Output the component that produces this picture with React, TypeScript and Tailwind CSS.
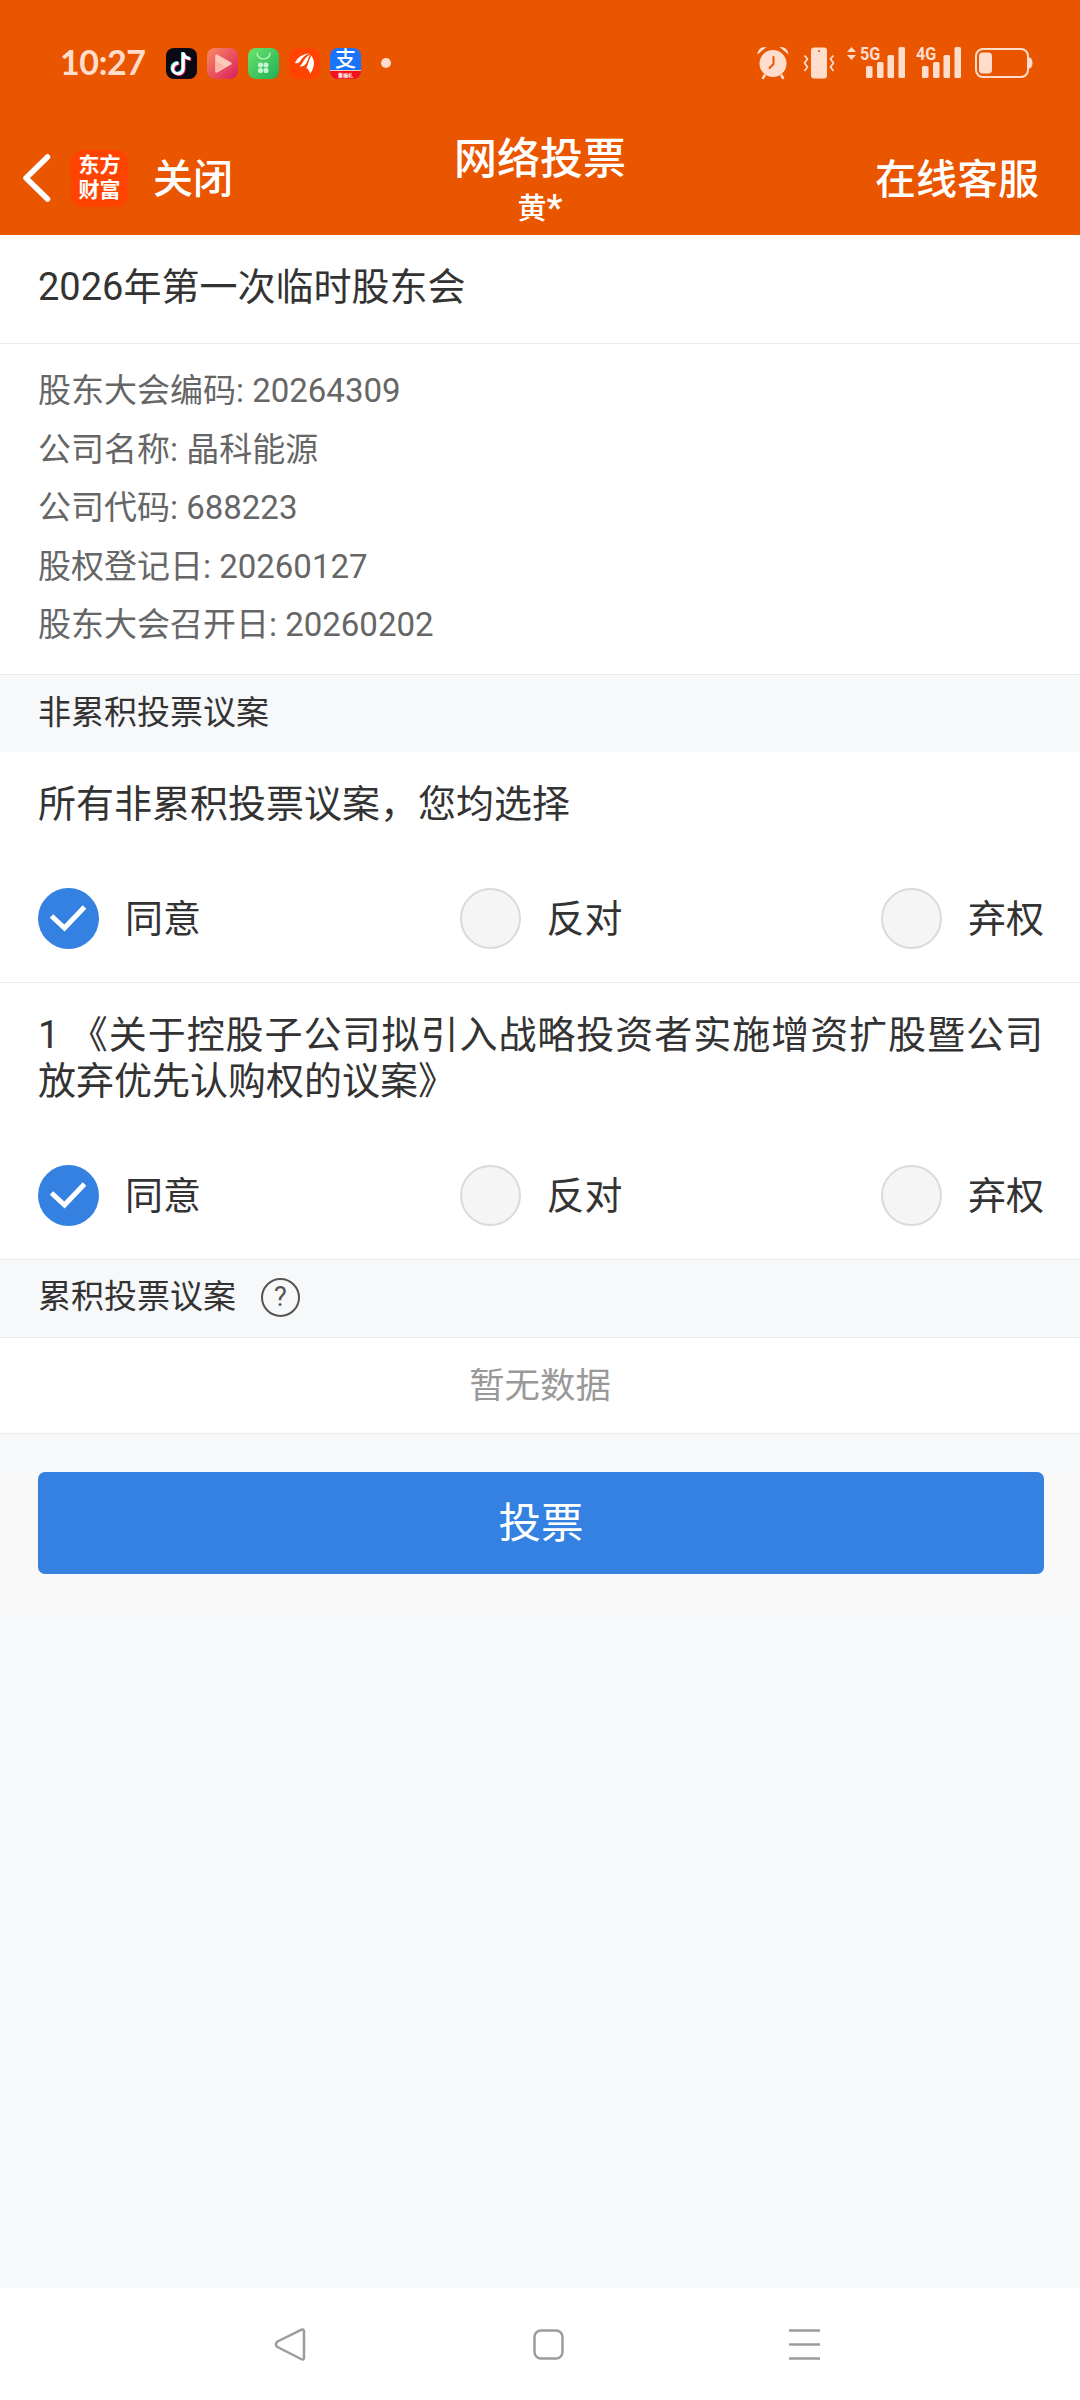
import { useState } from "react";

const SIGNAL_BARS = [
  { x: 0, h: 12 },
  { x: 11, h: 16 },
  { x: 21.5, h: 23 },
  { x: 32.5, h: 31 },
];

const MEETING_INFO = [
  { label: "股东大会编码", value: "20264309" },
  { label: "公司名称", value: "晶科能源" },
  { label: "公司代码", value: "688223" },
  { label: "股权登记日", value: "20260127" },
  { label: "股东大会召开日", value: "20260202" },
];

const OPTIONS = ["同意", "反对", "弃权"];

function TikTokIcon() {
  const note =
    "M17.300 4.500v16a5.300 5.300 0 1 1-4.800-5.300M17.300 4.800c.6 3.600 3.200 5.700 7 5.900";
  return (
    <svg viewBox="0 0 31 31" className="size-[31px]">
      <rect width="31" height="31" rx="8" fill="#0a0914" />
      <g fill="none" strokeWidth="3">
        <path d={note} stroke="#3fe8ea" transform="translate(-0.800 -0.600)" />
        <path d={note} stroke="#f4305c" transform="translate(0.900 0.700)" />
        <path d={note} stroke="#fff" />
      </g>
    </svg>
  );
}

function VideoIcon() {
  return (
    <svg viewBox="0 0 31 31" className="size-[31px]">
      <defs>
        <linearGradient id="video" x1="0" y1="0" x2="1" y2="1">
          <stop offset="0" stopColor="#fb8a63" />
          <stop offset="1" stopColor="#d91f5c" />
        </linearGradient>
      </defs>
      <rect width="31" height="31" rx="8" fill="url(#video)" />
      <path
        d="M9.500 7.500v16l14-8z"
        fill="#fdc9bd"
        stroke="#fdc9bd"
        strokeWidth="2.500"
        strokeLinejoin="round"
      />
      <path d="M8.500 12.500v11l9-5z" fill="#fdb3a8" />
    </svg>
  );
}

function MarketIcon() {
  return (
    <svg viewBox="0 0 31 31" className="size-[31px]">
      <defs>
        <linearGradient id="market" x1="0" y1="0" x2="1" y2="1">
          <stop offset="0" stopColor="#6be36b" />
          <stop offset="1" stopColor="#1faf58" />
        </linearGradient>
      </defs>
      <rect width="31" height="31" rx="8" fill="url(#market)" />
      <path
        d="M9 5a6.500 6 0 0 0 13 0"
        fill="none"
        stroke="#c9f6c4"
        strokeWidth="1.200"
        strokeLinecap="round"
      />
      <g fill="#c6f5cd">
        <rect x="10" y="14.500" width="5" height="5" rx="2" />
        <rect x="15.500" y="14.500" width="5" height="5" rx="2" />
        <rect x="10" y="20" width="5" height="5" rx="2" />
        <rect x="15.500" y="20" width="5" height="5" rx="2" />
      </g>
    </svg>
  );
}

function EastMoneyIcon() {
  return (
    <svg viewBox="0 0 31 31" className="size-[31px]">
      <rect width="31" height="31" rx="8" fill="#ff4300" />
      <g fill="#fff">
        <path d="M6 15C8 10 13 6 20.500 5.200c-4.500 2-7 4.300-9 7.500-1.500 2.300-3.500 3-5.500 2.300z" />
        <path d="M10.500 18.500C14 16 14.500 10 21.500 6.300c-1.800 3-2.600 5.700-4.100 8.700-1.400 2.700-4 4-6.900 3.500z" />
        <path d="M17.300 20c2-3 2-8 5-12.500 3.700 5 3.700 11.500-1.300 18.500 0-2.500-1.200-4.500-3.700-6z" />
      </g>
      <path
        d="M10.500 16.500c3-3 4-7.500 9-9.800M17 18.500c2-3 2-7 4.700-10.500"
        fill="none"
        stroke="#ff4300"
        strokeWidth="0.900"
      />
    </svg>
  );
}

function AlipayIcon() {
  return (
    <div className="flex h-[31px] w-[31px] flex-col items-center overflow-hidden rounded-[8px] bg-[#1a74fb]">
      <span className="h-[22px] text-[21px] leading-[23px] font-medium text-white">
        支
      </span>
      <span className="h-[9px] w-full border-t border-[#f6c9b0] bg-[#f5101c] text-center text-[5px] leading-[8px] font-bold text-white">
        集福礼
      </span>
    </div>
  );
}

function AlarmIcon() {
  return (
    <svg viewBox="0 0 32 34" className="h-[34px] w-[32px]">
      <circle cx="16" cy="17.500" r="13.500" fill="#ffddcd" />
      <g fill="none" stroke="#ffddcd" strokeLinecap="round">
        <path d="M7.500 29.500 6 32M24.500 29.500 26 32" strokeWidth="2.500" />
      </g>
      <path
        d="M.6 8.500C.5 4 4 .3 9.500 1zM31.400 8.500C31.500 4 28 .3 22.500 1z"
        fill="#ffddcd"
      />
      <path
        d="M16.500 11v7l-4 4"
        fill="none"
        stroke="#ea5500"
        strokeWidth="2"
        strokeLinecap="round"
        strokeLinejoin="round"
      />
    </svg>
  );
}

function VibrateIcon() {
  return (
    <svg viewBox="0 0 32 32" className="h-[32px] w-[32px]">
      <rect x="8" y=".5" width="16" height="31" rx="3" fill="#ffddcd" />
      <circle cx="16" cy="4" r="1.100" fill="#ea5500" />
      <path
        d="M1.500 8.500 4.500 12 1.500 16l3 4-3 4M30.500 8.500l-3 3.500 3 4-3 4 3 4"
        fill="none"
        stroke="#ffddcd"
        strokeWidth="1.700"
      />
    </svg>
  );
}

function Signal({ label, arrows }: { label: string; arrows?: boolean }) {
  return (
    <div className="relative h-[34px] w-[45px]">
      {arrows && (
        <svg viewBox="0 0 9 13" className="absolute top-px -left-[13px] h-[13px] w-[9px]">
          <path d="M4.500 0 9 5H0zM4.500 13 9 8H0z" fill="#ffddcd" />
        </svg>
      )}
      <span className="absolute -top-[2px] left-0 inline-block origin-left scale-x-85 font-[Roboto] text-[19px] leading-[19px] font-bold">
        {label}
      </span>
      <svg viewBox="0 0 39 32" className="absolute top-0 left-[6px] h-[32px] w-[39px]">
        {SIGNAL_BARS.map((bar) => (
          <rect
            key={bar.x}
            x={bar.x}
            y={32 - bar.h}
            width="6.500"
            height={bar.h}
            rx="1.500"
            fill="#ffddcd"
          />
        ))}
      </svg>
    </div>
  );
}

function BatteryIcon() {
  return (
    <svg viewBox="0 0 58 30" className="h-[30px] w-[58px]">
      <rect
        x="1"
        y="1"
        width="52"
        height="28"
        rx="7"
        fill="none"
        stroke="#ffddcd"
        strokeWidth="2"
      />
      <rect x="4" y="4.500" width="13" height="21" rx="3.500" fill="#ffddcd" />
      <path d="M54 9.500c2 0 3.500 2 3.500 5.500S56 20.500 54 20.500z" fill="#ffddcd" />
    </svg>
  );
}

function StatusBar() {
  return (
    <div className="flex h-[126px] items-center justify-between pr-[47px] pl-[60px] text-[#ffddcd]">
      <div className="flex items-center">
        <span className="mb-[3px] w-[106px] font-[Lato] text-[34px] leading-none font-bold tracking-[-0.400px]">
          10:27
        </span>
        <div className="flex gap-[10px]">
          <TikTokIcon />
          <VideoIcon />
          <MarketIcon />
          <EastMoneyIcon />
          <AlipayIcon />
        </div>
        <span className="ml-5 size-[10px] rounded-full bg-[#ffddcd]" />
      </div>
      <div className="flex items-center">
        <AlarmIcon />
        <div className="ml-[14px]">
          <VibrateIcon />
        </div>
        <div className="ml-[25px]">
          <Signal label="5G" arrows />
        </div>
        <div className="ml-[11px]">
          <Signal label="4G" />
        </div>
        <div className="ml-[14px]">
          <BatteryIcon />
        </div>
      </div>
    </div>
  );
}

function TitleBar() {
  return (
    <div className="grid h-[109px] grid-cols-3 text-white">
      <div className="flex items-center pb-[5px] pl-[22px]">
        <svg viewBox="0 0 29 48" className="h-[48px] w-[29px]">
          <path
            d="M25.500 3 4 24l21.500 21"
            fill="none"
            stroke="#fff"
            strokeWidth="5.500"
            strokeLinecap="round"
            strokeLinejoin="round"
          />
        </svg>
        <div className="ml-5 flex size-[57px] items-center justify-center rounded-[12px] bg-[#ff4300]">
          <p className="w-[42px] text-[21px] leading-[25px] font-bold break-all">
            东方财富
          </p>
        </div>
        <span className="mt-[3px] ml-[25px] text-[40px] leading-none font-medium">关闭</span>
      </div>
      <div className="flex flex-col items-center">
        <span className="mt-[9px] text-[43px] leading-[48px] font-medium">网络投票</span>
        <span className="mt-[2px] flex text-[29px] leading-[48px] font-medium">
          黄<span className="-mt-px text-[36px]">*</span>
        </span>
      </div>
      <div className="flex items-center justify-end pr-[41px] pb-px">
        <span className="text-[41px] leading-none font-medium">在线客服</span>
      </div>
    </div>
  );
}

function VoteOptions({
  value,
  onChange,
}: {
  value: string;
  onChange: (option: string) => void;
}) {
  return (
    <div className="flex h-[61px] w-[1004px] justify-between">
      {OPTIONS.map((option) => (
        <button
          key={option}
          onClick={() => onChange(option)}
          className="flex items-center gap-[26px]"
        >
          {value === option ? (
            <svg viewBox="0 0 61 61" className="size-[61px]">
              <circle cx="30.500" cy="30.500" r="30.500" fill="#3481e2" />
              <path
                d="M13.500 28 26.500 40 46.500 19"
                fill="none"
                stroke="#fff"
                strokeWidth="5"
              />
            </svg>
          ) : (
            <span className="size-[61px] rounded-full border-2 border-[#dadada] bg-[#f5f5f5]" />
          )}
          <span className="mt-px w-[74px] text-[38px] leading-[61px] whitespace-nowrap">
            {option}
          </span>
        </button>
      ))}
    </div>
  );
}

function NavBar() {
  return (
    <div className="flex h-[112px] bg-white">
      <svg viewBox="0 0 1080 112" className="h-[112px] w-[1080px]">
        <g fill="none" stroke="#9c9c9c" strokeWidth="2.500" strokeLinejoin="round">
          <path d="M277.500 53.500 301 41.800q3-1.300 3 1.700v26q0 3-3 1.500L277.500 59q-3.200-2.500 0-5.500z" />
          <rect x="534.500" y="42.500" width="28" height="28" rx="6.500" />
          <path d="M789 42.500h31M789 56.500h31M789 70.500h31" />
        </g>
      </svg>
    </div>
  );
}

export default function App() {
  const [allVote, setAllVote] = useState("同意");
  const [firstVote, setFirstVote] = useState("同意");

  // The vote on all proposals also sets each single one
  const handleVoteAll = (option: string) => {
    setAllVote(option);
    setFirstVote(option);
  };

  return (
    <div className="flex h-[2400px] w-[1080px] flex-col bg-[#f7f8fa] font-[Roboto,'Noto_Sans_CJK_SC',sans-serif] text-[#333333]">
      <header className="h-[235px] bg-[#ea5500]">
        <StatusBar />
        <TitleBar />
      </header>

      <main className="flex-1">
        <section className="bg-white">
          <h1 className="h-[109px] border-b border-[#ebebeb] px-[38px] text-[38px] leading-[105px]">
            2026年第一次临时股东会
          </h1>
          <div className="h-[331px] border-b border-[#ebebeb] px-[38px] pt-[17px] text-[33px] text-[#666666]">
            {MEETING_INFO.map((item) => (
              <p key={item.label} className="h-[58.600px] leading-[59px]">
                {item.label}: {item.value}
              </p>
            ))}
          </div>
        </section>

        <h2 className="h-[77px] px-[38px] text-[33px] leading-[75px]">非累积投票议案</h2>

        <section className="h-[231px] border-b border-[#ebebeb] bg-white px-[38px] pt-[29px]">
          <p className="h-[107px] text-[38px] leading-[46px]">
            所有非累积投票议案，您均选择
          </p>
          <VoteOptions value={allVote} onChange={handleVoteAll} />
        </section>
        <section className="h-[277px] border-b border-[#ebebeb] bg-white pt-[29px] pr-[37px] pl-[38px]">
          <p className="h-[153px] text-justify text-[38px] leading-[46px]">
            1 《关于控股子公司拟引入战略投资者实施增资扩股暨公司放弃优先认购权的议案》
          </p>
          <VoteOptions value={firstVote} onChange={setFirstVote} />
        </section>

        <h2 className="flex h-[78px] items-center border-b border-[#ebebeb] px-[38px] pb-[3px] text-[33px]">
          累积投票议案
          <span className="ml-[25px] flex size-[39px] items-center justify-center rounded-full border-2 border-[#555555] text-[27px] leading-none text-[#555555]">
            ?
          </span>
        </h2>

        <p className="h-[96px] border-b border-[#ebebeb] bg-white text-center text-[35.400px] leading-[97px] text-[#999999]">
          暂无数据
        </p>

        <div className="mt-[38px] h-[141px] bg-[#f9f9f9] pr-[36px] pl-[38px]">
          <button className="h-[102px] w-full rounded-[7px] bg-[#3481e2] pt-px text-[42.500px] text-white">
            投票
          </button>
        </div>
      </main>

      <NavBar />
    </div>
  );
}
